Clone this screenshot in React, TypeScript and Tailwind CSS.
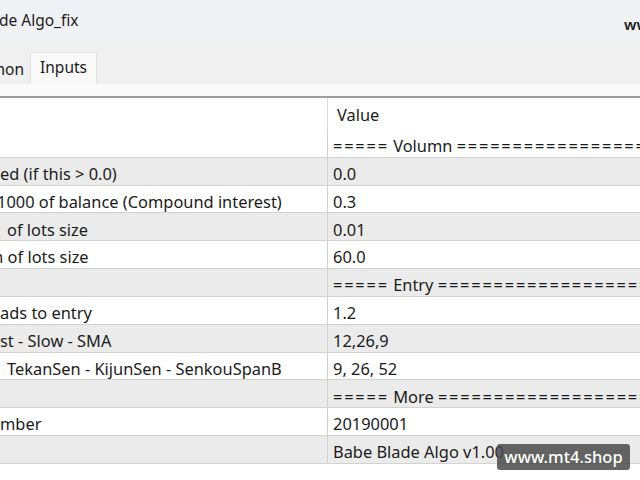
const font = "font-['Segoe_UI','Noto_Sans','Open_Sans',sans-serif]";

type Row = { label: string; value: string; shift: string; section?: boolean };

const rows: Row[] = [
  { label: '', value: 'Volumn', shift: '', section: true },
  { label: 'ed (if this > 0.0)', value: '0.0', shift: 'ml-0' },
  { label: '1000 of balance (Compound interest)', value: '0.3', shift: '-ml-[3px]' },
  { label: 'of lots size', value: '0.01', shift: 'ml-[7px]' },
  { label: 'm of lots size', value: '60.0', shift: '-ml-[12px]' },
  { label: '', value: 'Entry', shift: '', section: true },
  { label: 'ads to entry', value: '1.2', shift: 'ml-0' },
  { label: 'st - Slow - SMA', value: '12,26,9', shift: 'ml-0' },
  { label: 'TekanSen - KijunSen - SenkouSpanB', value: '9, 26, 52', shift: 'ml-[7px]' },
  { label: '', value: 'More', shift: '', section: true },
  { label: 'mber', value: '20190001', shift: 'ml-0' },
  { label: '', value: 'Babe Blade Algo v1.00', shift: '' },
];

export default function App() {
  return (
    <div className={`relative w-[640px] h-[480px] overflow-hidden bg-white text-[16.4px] text-[#1b1b1b] ${font}`}>
      {/* title bar */}
      <div className="h-[40px] bg-[#eff1f4] flex items-center justify-between">
        <span className="text-[15.5px] -ml-[1px] pt-[1px]">de Algo_fix</span>
        <span className="text-[15px] font-semibold mt-[8px] -mr-[14px] w-[30px] overflow-hidden whitespace-nowrap">www.mt4.shop</span>
      </div>

      {/* tabs */}
      <div className="h-[44px] bg-[#f0f0f0] flex items-end text-[15.5px]">
        <div className="h-[32px] w-[30px] flex items-center justify-end pr-[6px] overflow-hidden">
          <span className="mt-[4px]">hon</span>
        </div>
        <div className="h-[32px] w-[67px] bg-[#f9f9f9] border-x border-t border-[#e2e2e2] flex items-center justify-center">
          <span className="-mt-[1px]">Inputs</span>
        </div>
      </div>
      <div className="h-[14px] bg-[#fafafa] border-b-2 border-[#9e9e9e]" />

      {/* grid */}
      <div className="flex h-[32px]">
        <div className="w-[328px] border-r border-[#dcdcdc]" />
        <div className="flex-1 pl-[9px] flex items-center pt-[2px]">Value</div>
      </div>
      {rows.map((r, i) => (
        <div
          key={i}
          className={`flex h-[27.83px] border-b border-[#d2d2d2] ${i % 2 === 1 ? 'bg-[#ebebeb]' : 'bg-white'}`}
        >
          <div className="w-[328px] border-r border-[#d2d2d2] overflow-hidden flex items-center whitespace-nowrap pt-[6px]">
            <span className={r.shift}>{r.label}</span>
          </div>
          <div className="flex-1 pl-[5px] flex items-center whitespace-nowrap overflow-hidden pt-[6px]">
            {r.section ? (
              <span>
                <span className="tracking-[1.8px]">=====</span> {r.value}{' '}
                <span className="tracking-[1.8px]">==============================</span>
              </span>
            ) : (
              r.value
            )}
          </div>
        </div>
      ))}

      {/* watermark */}
      <div className="absolute left-[497px] top-[444px] w-[133px] h-[26px] rounded-[3px] bg-[#4a4a4a]/85 text-white text-[16.5px] font-medium flex items-center justify-center font-['Noto_Sans',sans-serif]">
        www.mt4.shop
      </div>
    </div>
  );
}
